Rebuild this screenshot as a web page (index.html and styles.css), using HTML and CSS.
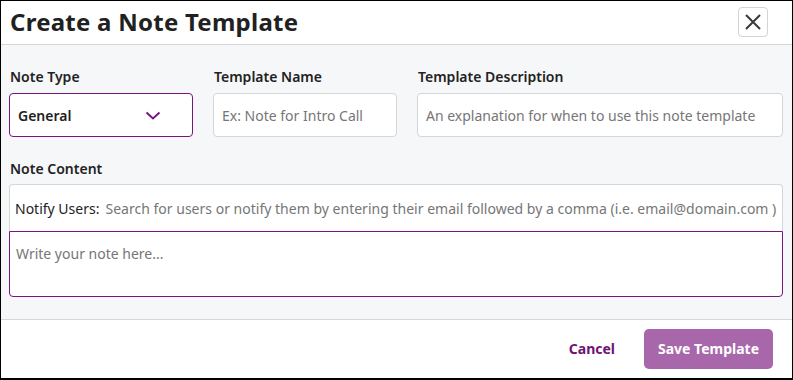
FILE: index.html
```html
<!DOCTYPE html>
<html lang="en">
<head>
<meta charset="utf-8">
<title>Create a Note Template</title>
<link rel="stylesheet" href="styles.css">
</head>
<body>
<div class="modal">
  <header class="modal-header">
    <h1 class="title">Create a Note Template</h1>
    <button class="close" aria-label="Close">
      <svg width="18" height="18" viewBox="0 0 18 18"><path d="M2 2 L16 16 M16 2 L2 16" stroke="#3a3a3a" stroke-width="2" fill="none"/></svg>
    </button>
  </header>
  <div class="modal-body">
    <div class="row">
      <div class="field field-type">
        <label class="label">Note Type</label>
        <div class="select">
          <span>General</span>
          <svg width="16" height="9" viewBox="0 0 16 9"><path d="M1.5 1.5 L8 7.5 L14.5 1.5" stroke="#7a1580" stroke-width="2" fill="none"/></svg>
        </div>
      </div>
      <div class="field field-name">
        <label class="label">Template Name</label>
        <div class="input placeholder">Ex: Note for Intro Call</div>
      </div>
      <div class="field field-desc">
        <label class="label">Template Description</label>
        <div class="input placeholder">An explanation for when to use this note template</div>
      </div>
    </div>
    <div class="field">
      <label class="label">Note Content</label>
      <div class="notify">
        <span class="notify-label">Notify Users:</span>
        <span class="placeholder">Search for users or notify them by entering their email followed by a comma (i.e. email@domain.com )</span>
      </div>
      <div class="textarea placeholder">Write your note here...</div>
    </div>
  </div>
  <footer class="modal-footer">
    <button class="cancel">Cancel</button>
    <button class="save">Save Template</button>
  </footer>
</div>
</body>
</html>
```

FILE: styles.css
```css
* { box-sizing: border-box; }
html, body { margin: 0; padding: 0; background: #fff; }
body { font-family: "Noto Sans", "Open Sans", sans-serif; color: #222; }

.modal {
  width: 793px;
  height: 380px;
  border: 1px solid #000;
  border-bottom-width: 2px;
  display: flex;
  flex-direction: column;
  background: #fff;
}

.modal-header {
  height: 44px;
  border-bottom: 1px solid #d6d7da;
  display: flex;
  align-items: center;
  justify-content: space-between;
  padding: 0 24px 0 9px;
  flex: none;
}
.title {
  margin: 0;
  font-size: 24px;
  font-weight: 700;
  color: #212121;
  letter-spacing: 0.25px;
  line-height: 1;
  margin-top: -1px;
}
.close {
  width: 30px;
  height: 30px;
  border: 1px solid #d4d4d4;
  border-radius: 4px;
  background: #fff;
  display: flex;
  align-items: center;
  justify-content: center;
  padding: 0;
  margin-top: -1px;
}

.modal-body {
  background: #f6f7f9;
  border-bottom: 1px solid #d6d7da;
  padding: 22px 9px 21px 8px;
  flex: none;
  height: 275px;
}
.row {
  display: flex;
  gap: 20px;
  margin-bottom: 22px;
}
.field { display: flex; flex-direction: column; }
.field-type, .field-name { width: 184px; }
.field-desc { width: 366px; }

.label {
  font-size: 14px;
  font-weight: 600;
  line-height: 20px;
  color: #222;
  margin-bottom: 6px;
  padding-left: 1px;
}
.field .label + .notify { margin-top: -1px; }

.select, .input {
  height: 44px;
  border-radius: 4px;
  background: #fff;
  display: flex;
  align-items: center;
  font-size: 14px;
}
.select {
  border: 1px solid #7a1580;
  padding: 0 31px 0 8px;
  justify-content: space-between;
  font-weight: 600;
  color: #222;
}
.input {
  border: 1px solid #d4d6d9;
  padding: 0 8px;
  white-space: nowrap;
  overflow: hidden;
}
.placeholder { color: #767676; font-size: 14px; font-weight: 400; }

.notify {
  height: 47px;
  border: 1px solid #d4d6d9;
  border-bottom: none;
  border-radius: 4px 4px 0 0;
  background: #fff;
  display: flex;
  align-items: center;
  padding: 0 0 0 5px;
  white-space: nowrap;
  overflow: hidden;
  font-size: 14px;
}
.notify-label { color: #222; margin-right: 6px; }
.notify .placeholder { letter-spacing: 0.01px; }

.textarea {
  height: 66px;
  border: 1px solid #7a1580;
  border-radius: 0 0 4px 4px;
  background: #fff;
  padding: 12px 6px;
  line-height: 20px;
}

.modal-footer {
  flex: 1;
  display: flex;
  align-items: center;
  justify-content: flex-end;
  padding: 0 19px 1px 0;
  gap: 29px;
}
.cancel {
  border: none;
  background: none;
  color: #6d1277;
  font-family: inherit;
  font-size: 14px;
  font-weight: 700;
  padding: 0;
}
.save {
  width: 129px;
  height: 40px;
  border: none;
  border-radius: 5px;
  background: #a967ab;
  color: #fff;
  font-family: inherit;
  font-size: 14px;
  font-weight: 700;
}
```
